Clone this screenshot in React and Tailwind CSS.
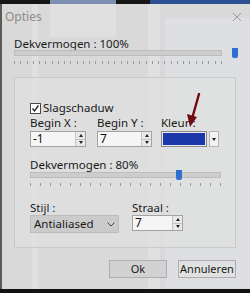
import React from 'react';

const font = { fontFamily: '"Noto Sans", "Open Sans", sans-serif' };

function Ticks({ count }) {
  // little tick marks under a slider
  return (
    <div className="flex justify-between h-[3px] mt-[5px]">
      {Array.from({ length: count }).map((_, i) => (
        <span key={i} className="w-px h-[3px] bg-[#9a9a9a]" />
      ))}
    </div>
  );
}

function Slider({ pos }) {
  return (
    <div className="relative h-[6px] bg-[#cdcdcd] border border-[#bdbdbd]">
      <div
        className="absolute top-[-3px] w-[6px] h-[10px] bg-[#2f6fd0] rounded-b-[2px]"
        style={{ left: pos }}
      />
    </div>
  );
}

function Spin({ value, width }) {
  return (
    <div
      className="flex h-[16px] border border-[#a3a3a3] bg-[#f5f5f5]"
      style={{ width }}
    >
      <div className="flex-1 px-[2px] text-[12px] leading-[14px] text-[#111]">{value}</div>
      <div className="w-[10px] flex flex-col border-l border-[#c4c4c4]">
        <div className="flex-1 flex items-center justify-center border-b border-[#c4c4c4] bg-[#e9e9e9]">
          <span className="w-0 h-0 border-x-[2px] border-x-transparent border-b-[3px] border-b-[#222]" />
        </div>
        <div className="flex-1 flex items-center justify-center bg-[#e9e9e9]">
          <span className="w-0 h-0 border-x-[2px] border-x-transparent border-t-[3px] border-t-[#222]" />
        </div>
      </div>
    </div>
  );
}

export default function App() {
  return (
    <div className="relative w-[250px] h-[293px] overflow-hidden bg-[#d9d9d9] text-[11.5px] text-[#1a1a1a]" style={font}>
      {/* glass reflections showing through, behind the controls */}
      <div className="absolute left-[50px] top-[4px] w-[66px] h-[33px] bg-white/20" />
      <div className="absolute left-[32px] top-[4px] w-[6px] h-[289px] bg-white/20" />
      <div className="absolute left-[148px] top-[4px] w-[12px] h-[289px] bg-white/20" />
      <div className="absolute left-[165px] top-[18px] w-[85px] h-[270px] bg-[#e6e8f0]/40" />

      {/* window top edge */}
      <div className="relative flex h-[4px] bg-[#161616]">
        <div className="w-[50px]" />
        <div className="w-[66px] bg-[#7d8fb0]" />
        <div className="w-[34px]" />
        <div className="flex-1 bg-[#2d4f93]" />
      </div>

      {/* title bar */}
      <div className="relative flex items-center justify-between h-[20px] pl-[5px] pr-[8px] mt-[3px]">
        <span className="text-[12px] text-[#8d8d8d]">Opties</span>
        <svg width="10" height="10" viewBox="0 0 10 10">
          <path d="M1 1 L9 9 M9 1 L1 9" stroke="#9a9a9a" strokeWidth="1" />
        </svg>
      </div>

      <div className="relative px-[14px] pt-[10px]">
        <div className="leading-[13px]">Dekvermogen : 100%</div>
        <div className="pr-[14px]">
          <Slider pos={217} />
          <Ticks count={34} />
        </div>

        {/* group box */}
        <div className="mt-[13px] h-[171px] w-[222px] border border-[#cacaca] bg-[#dfdfdf]/70 px-[15px] pt-[23px]">
          <div className="flex items-center gap-[2px] leading-[14px]">
            <span className="w-[11px] h-[11px] border border-[#4a4a4a] bg-white flex items-center justify-center">
              <svg width="9" height="9" viewBox="0 0 9 9">
                <path d="M1.5 4.5 L3.5 7 L7.5 1.5" stroke="#222" strokeWidth="1.3" fill="none" />
              </svg>
            </span>
            <span>Slagschaduw</span>
          </div>

          <div className="flex mt-[1px]">
            <div className="w-[67px]">
              <div className="leading-[14px]">Begin X :</div>
              <div className="mt-[1px]"><Spin value="-1" width={56} /></div>
            </div>
            <div className="w-[64px]">
              <div className="leading-[14px]">Begin Y :</div>
              <div className="mt-[1px]"><Spin value="7" width={55} /></div>
            </div>
            <div className="relative">
              <div className="leading-[14px]">Kleur :</div>
              <div className="flex mt-[1px] h-[16px] items-stretch">
                <div className="w-[46px] border border-[#8a8a8a] p-[1px] bg-[#e9e9e9]">
                  <div className="w-full h-full bg-[#1a38aa]" />
                </div>
                <div className="ml-[2px] w-[10px] border border-[#b5b5b5] bg-[#f2f2f2] flex items-center justify-center">
                  <span className="w-0 h-0 border-x-[2px] border-x-transparent border-t-[3px] border-t-[#222]" />
                </div>
              </div>
              {/* red pointer arrow over the swatch */}
              <svg className="absolute left-[23px] top-[-23px]" width="18" height="36" viewBox="0 0 18 36">
                <path d="M15 1 L8.5 24" stroke="#6e0c10" strokeWidth="2.4" strokeLinecap="round" />
                <path d="M3 21 L6 34 L13 24 Z" fill="#6e0c10" />
              </svg>
            </div>
          </div>

          <div className="mt-[11px] leading-[14px]">Dekvermogen : 80%</div>
          <div className="w-[191px]">
            <Slider pos={145} />
            <Ticks count={20} />
          </div>

          <div className="flex mt-[15px]">
            <div className="w-[102px]">
              <div className="leading-[14px]">Stijl :</div>
              <div className="w-[89px] h-[18px] bg-[#cbcbcb] border border-[#bcbcbc] flex items-center justify-between px-[3px]">
                <span>Antialiased</span>
                <svg width="8" height="5" viewBox="0 0 8 5">
                  <path d="M0.5 0.5 L4 4 L7.5 0.5" stroke="#444" fill="none" />
                </svg>
              </div>
            </div>
            <div>
              <div className="leading-[14px]">Straal :</div>
              <div><Spin value="7" width={51} /></div>
            </div>
          </div>
        </div>

        {/* buttons */}
        <div className="flex justify-end gap-[11px] mt-[12px]">
          <button className="w-[58px] h-[18px] border border-[#adadad] bg-[#d2d2d2] text-[11px] leading-[14px]">Ok</button>
          <button className="w-[58px] h-[18px] border border-[#adadad] bg-[#e1e1e1] text-[11px] leading-[14px]">Annuleren</button>
        </div>
      </div>

      <div className="absolute left-0 top-[4px] w-[2px] h-[289px] bg-[#5a5a5a]" />

      {/* bottom edge */}
      <div className="absolute left-0 bottom-0 w-full h-[4px] bg-[#121212]" />
    </div>
  );
}
